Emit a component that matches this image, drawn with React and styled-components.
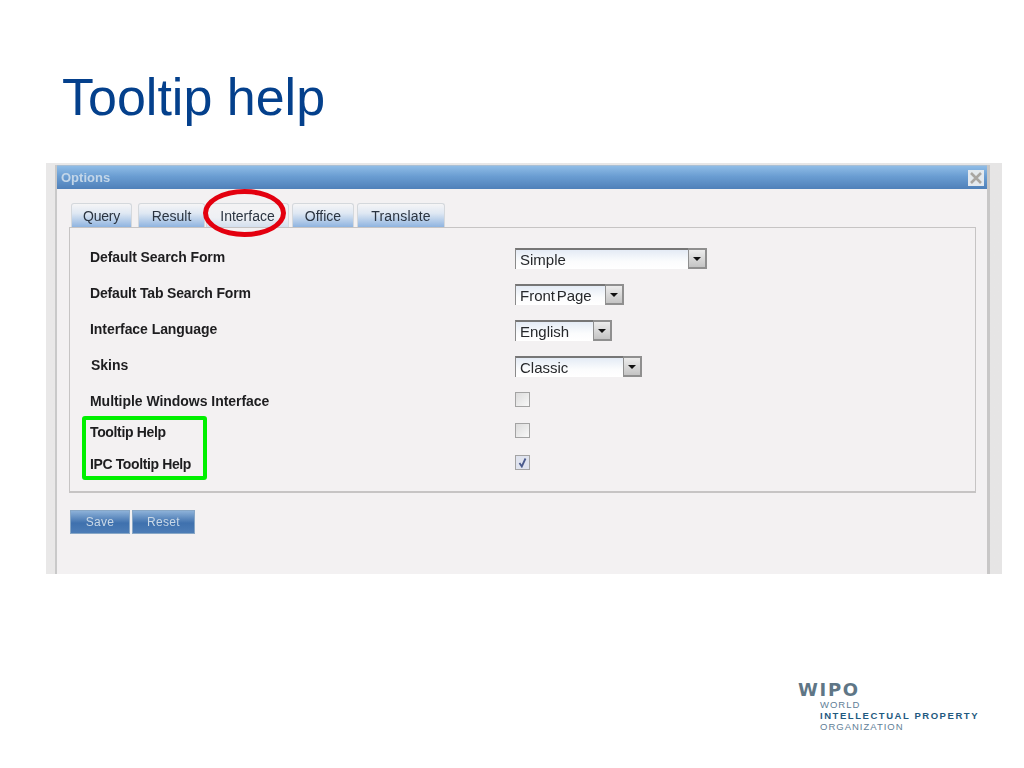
import React from 'react';
import styled, { createGlobalStyle } from 'styled-components';

const Global = createGlobalStyle`
  html, body { margin: 0; padding: 0; background: #fff; }
  body { font-family: "Liberation Sans", Arial, sans-serif; }
`;

const Slide = styled.div`
  width: 1024px;
  height: 768px;
  overflow: hidden;
  display: flex;
  flex-direction: column;
  background: #fff;
`;

const Title = styled.h1`
  margin: 0;
  padding: 67px 0 0 62px;
  height: 96px;
  font-size: 52px;
  line-height: 60px;
  font-weight: normal;
  color: #04408c;
`;

const Shot = styled.div`
  position: relative;
  width: 956px;
  height: 411px;
  margin-left: 46px;
  padding: 2px 15px 0 9px;
  box-sizing: border-box;
  display: flex;
  background: linear-gradient(90deg, #e9e8e8 0, #e6e5e5 100%);
  filter: blur(0.4px);
`;

const Win = styled.div`
  flex: 1;
  display: flex;
  flex-direction: column;
  border-left: 2px solid #c9c9c9;
  box-shadow: 3px 0 0 #c8c7c7;
  background: #f3f1f2;
`;

const Head = styled.div`
  height: 24px;
  display: flex;
  align-items: center;
  justify-content: space-between;
  padding: 0 3px 0 4px;
  background: linear-gradient(180deg, #8fbce6 0, #6a9dd2 45%, #4f80b9 100%);
  border-top: 1px solid #a9bfd4;
  box-sizing: border-box;
`;

const HeadTitle = styled.span`
  font-size: 13px;
  font-weight: bold;
  color: #c3d6e8;
`;

const CloseBox = styled.div`
  width: 16px;
  height: 16px;
  background: #e4e9ee;
  display: flex;
  align-items: center;
  justify-content: center;
`;

const Body = styled.div`
  padding: 14px 11px 0 12px;
`;

const Tabs = styled.div`
  display: flex;
  height: 24px;
  padding-left: 2px;
`;

const Tab = styled.div`
  width: ${p => p.$w}px;
  margin-right: ${p => p.$gap}px;
  box-sizing: border-box;
  border: 1px solid #d4d8dc;
  border-bottom: 0;
  border-radius: 3px 3px 0 0;
  display: flex;
  align-items: center;
  justify-content: center;
  font-size: 14px;
  letter-spacing: ${p => p.$ls}px;
  color: #2b3440;
  background: ${p => p.$active
    ? 'linear-gradient(180deg, #f4f3f4 0, #eef0f4 60%, #d3dfee 100%)'
    : 'linear-gradient(180deg, #f6f5f6 0, #dfe8f3 40%, #8fb4e0 100%)'};
`;

const Panel = styled.div`
  height: 266px;
  box-sizing: border-box;
  border: 1px solid #c6c4c4;
  border-bottom-width: 2px;
  padding-top: 11px;
`;

const Row = styled.div`
  height: ${p => p.$h}px;
  display: grid;
  grid-template-columns: 445px 1fr;
  align-items: center;
`;

const Label = styled.div`
  padding-left: ${p => (p.$nudge ? 21 : 20)}px;
  font-size: 14px;
  font-weight: bold;
  letter-spacing: ${p => p.$ls}px;
  color: #1d1d1f;
`;

const Select = styled.div`
  width: ${p => p.$w}px;
  height: 21px;
  margin-top: 2px;
  box-sizing: border-box;
  display: flex;
  justify-content: space-between;
  border-top: 2px solid #767676;
  border-left: 1px solid #8a8a8a;
  background: linear-gradient(180deg, #e4ebf5 0, #fbfcfd 60%, #ffffff 100%);
`;

const SelectText = styled.span`
  padding-left: 4px;
  font-size: 15px;
  line-height: 19px;
  word-spacing: -2.5px;
  color: #26282b;
`;

const Arrow = styled.div`
  width: 19px;
  margin-top: -2px;
  box-sizing: border-box;
  border: 2px solid #8f8f8f;
  border-left-width: 1px;
  background: linear-gradient(180deg, #ececec 0, #c4c4c4 100%);
  display: flex;
  align-items: center;
  justify-content: center;

  &::after {
    content: "";
    margin-top: 2px;
    border-left: 4px solid transparent;
    border-right: 4px solid transparent;
    border-top: 4px solid #111;
  }
`;

const Check = styled.div`
  width: 15px;
  height: 15px;
  margin-bottom: 3px;
  box-sizing: border-box;
  border: 1px solid #a3a3a3;
  background: ${p => p.$on ? '#dfe3ee' : 'linear-gradient(135deg, #dcdcdc 0, #f8f8f8 100%)'};
  display: flex;
  align-items: center;
  justify-content: center;
`;

const Buttons = styled.div`
  display: flex;
  gap: 2px;
  margin-top: 17px;
  padding-left: 1px;
`;

const Button = styled.div`
  width: ${p => p.$w}px;
  height: 24px;
  box-sizing: border-box;
  border: 1px solid #88a7c6;
  display: flex;
  align-items: center;
  justify-content: center;
  font-size: 12px;
  color: #c9d8e7;
  letter-spacing: 0.3px;
  background: linear-gradient(180deg, #8db1d8 0, #3f71ae 55%, #4c7cb6 100%);
`;

const RedRing = styled.div`
  position: absolute;
  left: 157px;
  top: 26px;
  width: 83px;
  height: 48px;
  box-sizing: border-box;
  border: 5px solid #e3000f;
  border-radius: 50%;
`;

const GreenBox = styled.div`
  position: absolute;
  left: 36px;
  top: 253px;
  width: 125px;
  height: 64px;
  box-sizing: border-box;
  border: 4px solid #00f000;
  border-radius: 3px;
`;

const Logo = styled.div`
  margin: 107px 0 0 798px;
  display: flex;
  flex-direction: column;
`;

const LogoMark = styled.div`
  font-family: "DejaVu Sans", sans-serif;
  font-size: 18px;
  line-height: 18px;
  font-weight: bold;
  letter-spacing: 1.7px;
  color: #5f7686;
`;

const LogoLine = styled.div`
  margin-left: 22px;
  font-size: 9.5px;
  line-height: 11px;
  letter-spacing: ${p => (p.$bold ? 1.55 : 1)}px;
  font-weight: ${p => (p.$bold ? 'bold' : 'normal')};
  color: ${p => (p.$bold ? '#1f5a80' : '#5f8097')};
`;

const tabs = [
  { name: 'Query', w: 61, gap: 6, ls: -0.2 },
  { name: 'Result', w: 67, gap: 1, ls: 0 },
  { name: 'Interface', w: 83, active: true, gap: 3, ls: 0 },
  { name: 'Office', w: 62, gap: 3, ls: 0 },
  { name: 'Translate', w: 88, gap: 0, ls: 0.2 },
];

const rows = [
  { label: 'Default Search Form', h: 36, select: 'Simple', w: 192, ls: -0.1 },
  { label: 'Default Tab Search Form', h: 36, select: 'Front Page', w: 109, ls: -0.17 },
  { label: 'Interface Language', h: 36, select: 'English', w: 97, ls: -0.06 },
  { label: 'Skins', h: 36, select: 'Classic', w: 127, nudge: true, ls: 0 },
  { label: 'Multiple Windows Interface', h: 36, check: 'off', ls: -0.04 },
  { label: 'Tooltip Help', h: 26, check: 'off', ls: -0.35 },
  { label: 'IPC Tooltip Help', h: 38, check: 'on', ls: -0.38 },
];

export default function App() {
  return (
    <Slide>
      <Global />
      <Title>Tooltip help</Title>
      <Shot>
        <Win>
          <Head>
            <HeadTitle>Options</HeadTitle>
            <CloseBox>
              <svg width="14" height="14" viewBox="0 0 14 14">
                <path d="M2 2 L12 12 M12 2 L2 12" stroke="#a9a6a2" strokeWidth="2.6" />
              </svg>
            </CloseBox>
          </Head>
          <Body>
            <Tabs>
              {tabs.map(t => (
                <Tab key={t.name} $w={t.w} $gap={t.gap} $ls={t.ls} $active={t.active}>{t.name}</Tab>
              ))}
            </Tabs>
            <Panel>
              {rows.map(r => (
                <Row key={r.label} $h={r.h}>
                  <Label $nudge={r.nudge} $ls={r.ls}>{r.label}</Label>
                  {r.select ? (
                    <Select $w={r.w}>
                      <SelectText>{r.select}</SelectText>
                      <Arrow />
                    </Select>
                  ) : (
                    <Check $on={r.check === 'on'}>
                      {r.check === 'on' && (
                        <svg width="11" height="11" viewBox="0 0 11 11">
                          <path d="M2.5 6 L4.8 9.5 L8.5 1.5" fill="none" stroke="#4a5a8c" strokeWidth="1.8" />
                        </svg>
                      )}
                    </Check>
                  )}
                </Row>
              ))}
            </Panel>
            <Buttons>
              <Button $w={60}>Save</Button>
              <Button $w={63}>Reset</Button>
            </Buttons>
          </Body>
        </Win>
        <RedRing />
        <GreenBox />
      </Shot>
      <Logo>
        <LogoMark>WIPO</LogoMark>
        <LogoLine>WORLD</LogoLine>
        <LogoLine $bold>INTELLECTUAL PROPERTY</LogoLine>
        <LogoLine>ORGANIZATION</LogoLine>
      </Logo>
    </Slide>
  );
}
